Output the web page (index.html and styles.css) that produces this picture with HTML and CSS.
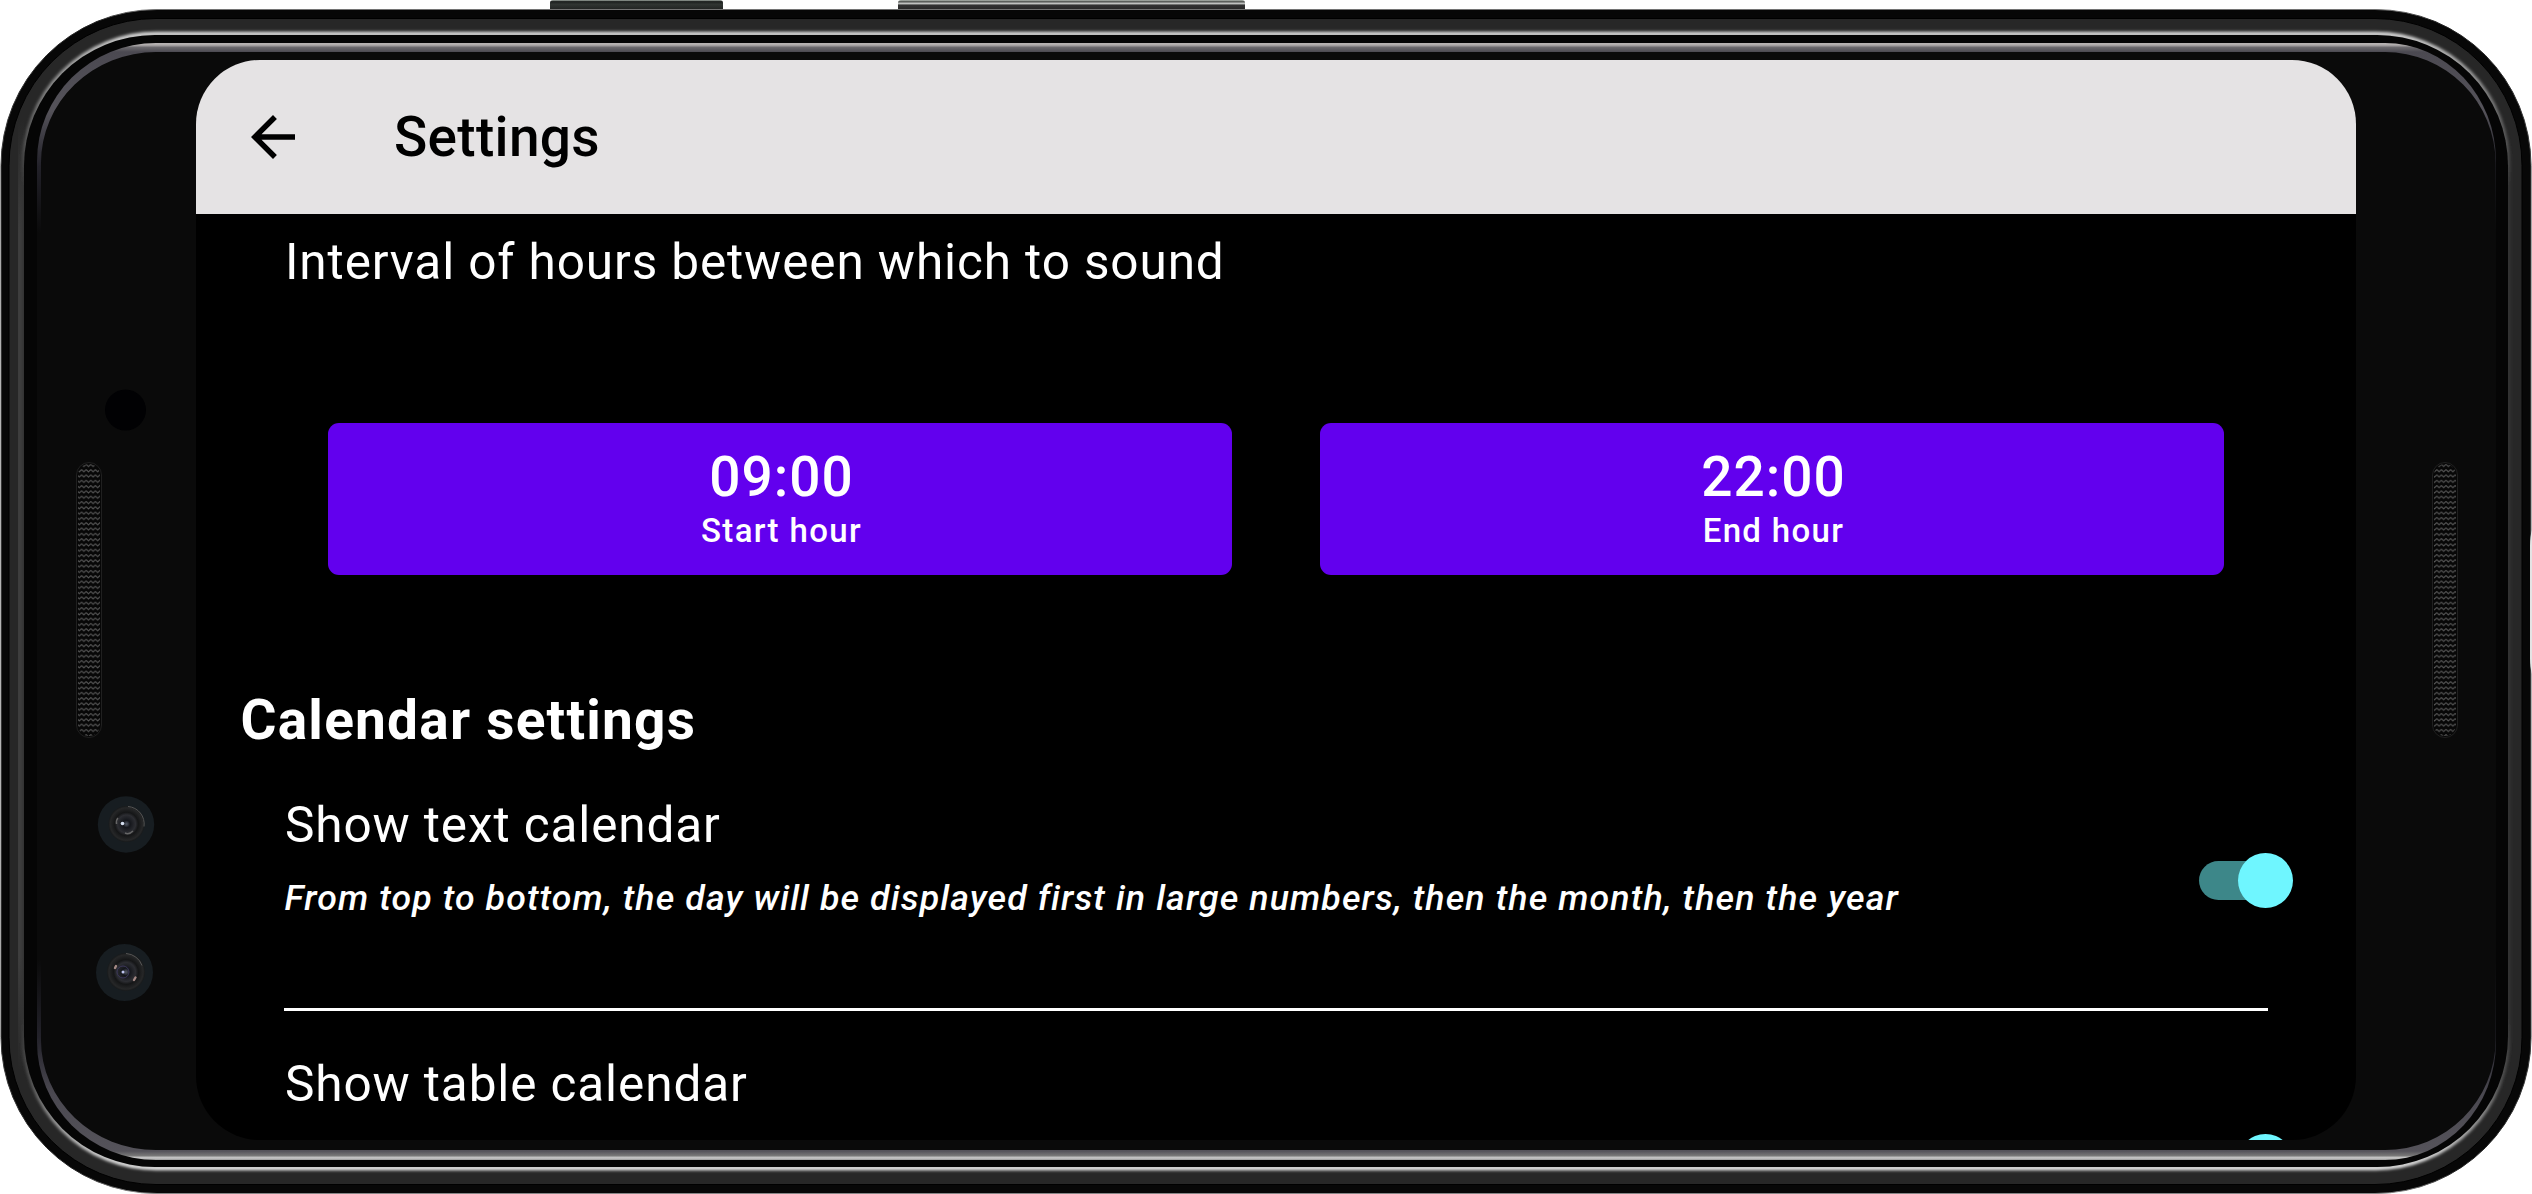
FILE: index.html
```html
<!DOCTYPE html>
<html lang="en">
<head>
<meta charset="utf-8">
<title>Settings</title>
<link rel="stylesheet" href="styles.css">
</head>
<body>
<div class="device">
  <svg class="shell" viewBox="0 0 2532 1194" width="2532" height="1194" aria-hidden="true">
    <defs>
      <linearGradient id="rim" gradientUnits="userSpaceOnUse" x1="0" y1="9" x2="0" y2="1194">
        <stop offset="0" stop-color="#777"/><stop offset=".01" stop-color="#222"/><stop offset=".3" stop-color="#666"/><stop offset=".7" stop-color="#666"/><stop offset=".98" stop-color="#222"/><stop offset="1" stop-color="#888"/>
      </linearGradient>
      <linearGradient id="glow" gradientUnits="userSpaceOnUse" x1="0" y1="30" x2="0" y2="1172">
        <stop offset="0" stop-color="#e2e2e2"/><stop offset=".03" stop-color="#a8a8a8"/><stop offset=".08" stop-color="#666"/><stop offset=".14" stop-color="#303030"/><stop offset=".86" stop-color="#303030"/><stop offset=".92" stop-color="#555"/><stop offset=".97" stop-color="#b4b4b4"/><stop offset="1" stop-color="#f4f4f4"/>
      </linearGradient>
      <linearGradient id="side" gradientUnits="userSpaceOnUse" x1="0" y1="120" x2="0" y2="1070">
        <stop offset="0" stop-color="#3d3d3d" stop-opacity="0"/><stop offset=".12" stop-color="#3d3d3d"/><stop offset=".88" stop-color="#3d3d3d"/><stop offset="1" stop-color="#3d3d3d" stop-opacity="0"/>
      </linearGradient>
      <linearGradient id="chamfer" gradientUnits="userSpaceOnUse" x1="0" y1="43" x2="0" y2="1160">
        <stop offset="0" stop-color="#b8b4b4"/><stop offset=".0018" stop-color="#b0acac"/><stop offset=".004" stop-color="#6a686c"/><stop offset=".008" stop-color="#4b4951"/><stop offset=".06" stop-color="#55535a"/><stop offset=".11" stop-color="#23222a"/><stop offset=".17" stop-color="#0a0a0a"/><stop offset=".82" stop-color="#0a0a0a"/><stop offset=".89" stop-color="#23222a"/><stop offset=".94" stop-color="#4a4850"/><stop offset=".992" stop-color="#55535a"/><stop offset=".996" stop-color="#777"/><stop offset=".998" stop-color="#ccc"/><stop offset="1" stop-color="#999"/>
      </linearGradient>
      <linearGradient id="key" gradientUnits="userSpaceOnUse" x1="0" y1="0" x2="0" y2="11">
        <stop offset="0" stop-color="#8b938d"/><stop offset=".1" stop-color="#6c736e"/><stop offset=".14" stop-color="#1c1f1e"/><stop offset=".4" stop-color="#303532"/><stop offset="1" stop-color="#1c1e1d"/>
      </linearGradient>
      <linearGradient id="keyLong" gradientUnits="userSpaceOnUse" x1="0" y1="0" x2="0" y2="11">
        <stop offset="0" stop-color="#a4aaa4"/><stop offset=".1" stop-color="#8a908a"/><stop offset=".17" stop-color="#303230"/><stop offset=".27" stop-color="#c8cac8"/><stop offset=".36" stop-color="#b8bab8"/><stop offset=".45" stop-color="#333"/><stop offset="1" stop-color="#222"/>
      </linearGradient>
      <radialGradient id="lens">
        <stop offset="0" stop-color="#555b68"/><stop offset=".2" stop-color="#14161b"/><stop offset=".5" stop-color="#2c2d32"/><stop offset=".65" stop-color="#151617"/><stop offset=".9" stop-color="#262728"/><stop offset="1" stop-color="#17191a"/>
      </radialGradient>
      <pattern id="mesh" width="4.6" height="5.3" patternUnits="userSpaceOnUse" x="77" y="463">
        <path d="M0 1.2 2.3 3.5 4.6 1.2" fill="none" stroke="#585858" stroke-width="1"/>
      </pattern>
      <filter id="soft" x="-1%" y="-1%" width="102%" height="102%"><feGaussianBlur stdDeviation="1.4"/></filter>
    </defs>
    <path d="M550 11V3q0-3 3-3h167q3 0 3 3v8z" fill="url(#key)"/>
    <path d="M898 11V3q0-3 3-3h341q3 0 3 3v8z" fill="url(#keyLong)"/>
    <rect x="1" y="9.5" width="2530" height="1184" rx="156" fill="#070707" stroke="url(#rim)"/>
    <rect x="9" y="18.500" width="2513" height="1166" rx="147" fill="#272727" stroke="#000"/>
    <path d="M18 120H24V1070H18z" fill="url(#side)"/>
    <rect x="24" y="34" width="2484" height="1134" rx="132" fill="none" stroke="url(#glow)" stroke-width="4.500" filter="url(#soft)"/>
    <rect x="24" y="35" width="2484" height="1132" rx="131" fill="#050505"/>
    <path fill="url(#chamfer)" d="M156 43H2385A111 118 0 0 1 2496 161V1042A111 118 0 0 1 2385 1160H156A119 118 0 0 1 37 1042V161A119 118 0 0 1 156 43Z"/>
    <path fill="#0a0a0a" d="M156 52H2385A110.500 111 0 0 1 2495.500 163V1040A110.500 110 0 0 1 2385 1150H156A115 110 0 0 1 41 1040V163A115 111 0 0 1 156 52Z"/>
    <path d="M2532 530q-2 6-2 16v112q0 10 2 16z" fill="#e4e4e4"/>
    <circle cx="125.500" cy="410" r="20.500" fill="#010103"/>
    <rect x="76.500" y="462.500" width="25" height="275" rx="12.500" fill="#070707" stroke="#202020"/>
    <rect x="78" y="464" width="22" height="272" rx="11" fill="url(#mesh)"/>
    <rect x="2432.500" y="462.500" width="25" height="275" rx="12.500" fill="#070707" stroke="#202020"/>
    <rect x="2434" y="464" width="22" height="272" rx="11" fill="url(#mesh)"/>
    <circle cx="126" cy="824.500" r="28.200" fill="#171d21"/>
    <circle cx="126.500" cy="824" r="18" fill="url(#lens)"/>
    <path d="M128 806.500a17.500 17.500 0 0 1 16 20" fill="none" stroke="#555"/>
    <path d="M118 818q-2 2-1.500 6M133 831q-4 4-8 2" fill="none" stroke="#666" stroke-width="1.500"/>
    <circle cx="122.500" cy="823.500" r="1.800" fill="#d5deef"/>
    <circle cx="124.500" cy="972.500" r="28.500" fill="#171d21"/>
    <circle cx="126" cy="972" r="19" fill="url(#lens)"/>
    <path d="M126 953.500a18 18 0 0 1 16 12" fill="none" stroke="#555"/>
    <circle cx="123" cy="972" r="6" fill="none" stroke="#3c375a"/>
    <circle cx="123" cy="972" r="1.500" fill="#bfc6f0"/>
    <path d="M115 968l1-2M134 980l1.500-2.500" stroke="#a58a86" stroke-width="2.400" stroke-linecap="round"/>
  </svg>

  <main class="screen">
    <header class="app-bar">
      <svg class="back" viewBox="0 0 24 24"><path d="M20 11H7.830l5.590-5.590L12 4l-8 8 8 8 1.410-1.410L7.830 13H20v-2z"/></svg>
      <h1 class="title">Settings</h1>
    </header>
    <section class="hours">
      <p class="label">Interval of hours between which to sound</p>
      <div class="hour-buttons">
        <button class="hour"><span class="time">09:00</span><span class="caption">Start hour</span></button>
        <button class="hour"><span class="time">22:00</span><span class="caption">End hour</span></button>
      </div>
    </section>
    <h2 class="section-title">Calendar settings</h2>
    <section class="setting">
      <div class="setting-text">
        <p class="label">Show text calendar</p>
        <p class="hint">From top to bottom, the day will be displayed first in large numbers, then the month, then the year</p>
      </div>
      <span class="switch"></span>
    </section>
    <hr class="divider">
    <section class="setting second">
      <div class="setting-text"><p class="label">Show table calendar</p></div>
      <span class="switch"></span>
    </section>
  </main>
</div>
</body>
</html>
```
FILE: styles.css
```css
* { box-sizing: border-box; }
body { margin: 0; background: #fff; font-family: Roboto, "Liberation Sans", sans-serif; }
h1, h2, p { margin: 0; white-space: nowrap; }

.device { position: relative; width: 2532px; height: 1194px; padding: 60px 176px 54px 196px; overflow: hidden; }
.shell { position: absolute; inset: 0; }
.screen { position: relative; width: 2160px; height: 1080px; border-radius: 64px; background: #000; color: #fff; overflow: hidden; display: flex; flex-direction: column; }

.app-bar { flex: none; display: flex; align-items: center; height: 154px; padding-left: 44px; gap: 88px; background: #e5e3e4; color: #000; }
.back { width: 66px; height: 66px; }
.title { font-size: 55px; font-weight: 500; line-height: 64px; letter-spacing: 0.3px; }

.hours { flex: none; padding: 18px 132px 0 88px; }
.label { padding-left: 1px; font-size: 49.5px; line-height: 60px; letter-spacing: 0.88px; }
.hour-buttons { display: flex; gap: 88px; margin: 131px 0 0 44px; }
.hour { flex: 1; height: 152px; padding: 20px 0 0 3px; border: 0; border-radius: 11px; background: #6200ee; color: #fff; font: 500 33px Roboto, sans-serif; display: flex; flex-direction: column; align-items: center; }
.time { font-size: 55px; line-height: 68px; letter-spacing: 1px; }
.caption { line-height: 40px; letter-spacing: 1.35px; }

.section-title { flex: none; margin: 112px 0 0 44px; padding-left: 0.5px; font-size: 55px; line-height: 66px; font-weight: 700; letter-spacing: 1.22px; }

.setting { flex: none; display: flex; justify-content: space-between; height: 213px; margin-top: 42px; padding: 0 63px 0 88px; }
.hint { margin-top: 20px; padding-left: 0.5px; font-size: 35.75px; line-height: 46px; font-weight: 500; font-style: italic; letter-spacing: 1.1px; }
.switch { position: relative; flex: none; width: 94px; height: 55px; margin-top: 58px; }
.switch::before { content: ""; position: absolute; left: 0; top: 8px; width: 80px; height: 39px; border-radius: 20px; background: #3d8789; }
.switch::after { content: ""; position: absolute; right: 0; top: 0; width: 55px; height: 55px; border-radius: 50%; background: #6ff6ff; }
.divider { flex: none; width: 1984px; height: 3px; margin: 0 0 0 88px; border: 0; background: #fff; }
.second { margin-top: 43px; }
.second .switch { margin-top: 80px; }
```
